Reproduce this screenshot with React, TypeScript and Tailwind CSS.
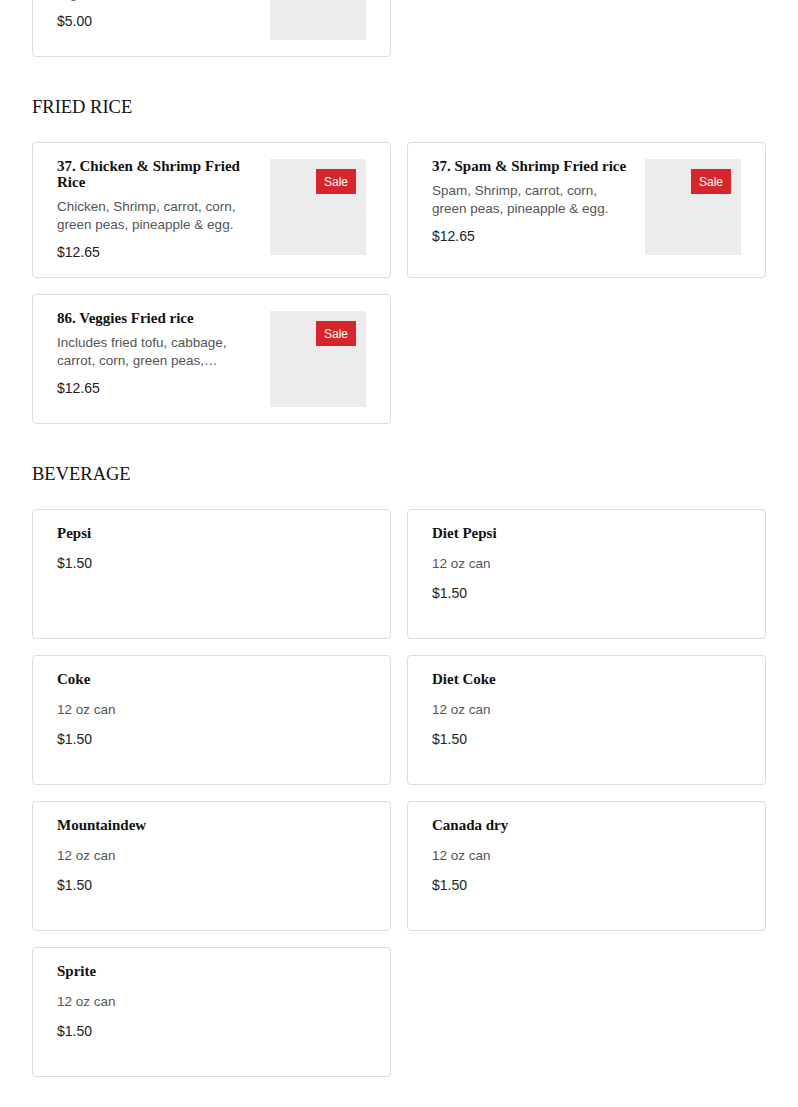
import React from 'react';

type Item = {
  name: string;
  desc?: string;
  price: string;
  sale?: boolean;
  image?: boolean;
};

const friedRice: Item[] = [
  { name: '37. Chicken & Shrimp Fried Rice', desc: 'Chicken, Shrimp, carrot, corn, green peas, pineapple & egg.', price: '$12.65', sale: true, image: true },
  { name: '37. Spam & Shrimp Fried rice', desc: 'Spam, Shrimp, carrot, corn, green peas, pineapple & egg.', price: '$12.65', sale: true, image: true },
  { name: '86. Veggies Fried rice', desc: 'Includes fried tofu, cabbage, carrot, corn, green peas, pineapple & egg.', price: '$12.65', sale: true, image: true },
];

const beverages: Item[] = [
  { name: 'Pepsi', price: '$1.50' },
  { name: 'Diet Pepsi', desc: '12 oz can', price: '$1.50' },
  { name: 'Coke', desc: '12 oz can', price: '$1.50' },
  { name: 'Diet Coke', desc: '12 oz can', price: '$1.50' },
  { name: 'Mountaindew', desc: '12 oz can', price: '$1.50' },
  { name: 'Canada dry', desc: '12 oz can', price: '$1.50' },
  { name: 'Sprite', desc: '12 oz can', price: '$1.50' },
];

const serif = "font-['Liberation_Serif',serif]";
const sans = "font-['Liberation_Sans',sans-serif]";

// card with picture on the right
function FoodCard({ item }: { item: Item }) {
  return (
    <div className="flex gap-4 rounded border border-[#dcdcdc] bg-white pt-4 pb-4 pl-6 pr-6">
      <div className="flex-1 min-w-0 -mt-px">
        <h3 className={`${serif} text-[15px] leading-4 font-bold text-[#111]`}>{item.name}</h3>
        {item.desc && (
          <p className={`${sans} mt-2 text-[13.5px] leading-[18px] text-[#555] line-clamp-2`}>{item.desc}</p>
        )}
        <p className={`${sans} mt-[9px] text-[14px] leading-[18px] text-[#222]`}>{item.price}</p>
      </div>
      {item.image && (
        <div className="relative w-24 h-24 shrink-0 bg-[#ececec]">
          {item.sale && (
            <span className={`${sans} absolute top-2.5 right-2.5 bg-[#d7262b] text-white text-[12px] w-10 h-[25px] flex items-center justify-center`}>
              Sale
            </span>
          )}
        </div>
      )}
    </div>
  );
}

// drinks: no picture, fixed height
function DrinkCard({ item }: { item: Item }) {
  return (
    <div className="h-[130px] rounded border border-[#dcdcdc] bg-white pt-[15px] px-6">
      <h3 className={`${serif} text-[15px] leading-4 font-bold text-[#111]`}>{item.name}</h3>
      {item.desc && (
        <p className={`${sans} mt-[15px] text-[13.5px] leading-4 text-[#555]`}>{item.desc}</p>
      )}
      <p className={`${sans} ${item.desc ? 'mt-[13px]' : 'mt-[14px]'} text-[14px] leading-4 text-[#222]`}>{item.price}</p>
    </div>
  );
}

function Section({ title, children }: { title: string; children: React.ReactNode }) {
  return (
    <section className="mt-[40px]">
      <h2 className={`${serif} text-[18.5px] leading-5 text-[#111] uppercase`}>{title}</h2>
      <div className="mt-[25px] grid grid-cols-2 gap-4">{children}</div>
    </section>
  );
}

export default function App() {
  return (
    <div className="min-h-screen bg-white px-8 pb-8 overflow-hidden">
      {/* previous section, scrolled past */}
      <div className="grid grid-cols-2 gap-4 -mt-[73px]">
        <FoodCard
          item={{
            name: '12. Egg rolls (4 pcs)',
            desc: 'Crispy rolls with cabbage, carrot & glass noodle, served with sauce.',
            price: '$5.00',
            image: true,
          }}
        />
      </div>

      <Section title="Fried Rice">
        {friedRice.map((it) => (
          <FoodCard key={it.name} item={it} />
        ))}
      </Section>

      <Section title="Beverage">
        {beverages.map((it) => (
          <DrinkCard key={it.name} item={it} />
        ))}
      </Section>
    </div>
  );
}
